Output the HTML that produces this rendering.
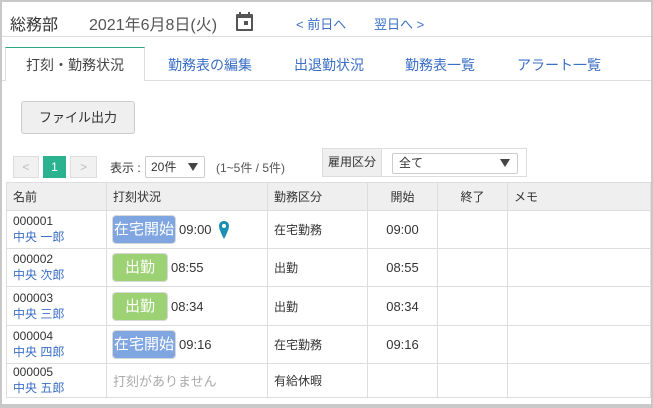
<!DOCTYPE html>
<html><head><meta charset="utf-8"><style>
*{box-sizing:border-box;margin:0;padding:0}
body{width:653px;height:408px;background:#c8c8c8;font-family:"Liberation Sans","Noto Sans CJK JP",sans-serif;color:#333;position:relative;overflow:hidden}
.frame{position:absolute;left:2px;top:2px;width:649px;height:402px;background:#fff}
.a{position:absolute;white-space:nowrap}
.link{color:#3b6fc6}
table{position:absolute;left:6px;top:182px;width:645px;border-collapse:collapse;font-size:12px}
td,th{border:1px solid #ddd;vertical-align:middle;text-align:left;font-weight:normal;padding:0 6px}
th{background:#efefef;height:28px}
.t{font-size:13px;vertical-align:middle;margin-left:3px}
.badge{display:inline-block;color:#fff;border-radius:4px;font-size:15px;height:29px;line-height:27px;text-align:center;vertical-align:middle;border:1px solid #d8d8d8}
.bl{background:#7fa6e0;width:64px}
.gr{background:#9cd174;width:56px}
.arr{position:absolute;top:6px;width:0;height:0;border-left:5px solid transparent;border-right:5px solid transparent;border-top:8px solid #444}
</style></head><body>
<div class="frame"></div>
<div class="a" style="left:10px;top:11px;font-size:16px">総務部</div>
<div class="a" style="left:89px;top:11px;font-size:16px;color:#555">2021年6月8日(火)</div>
<svg class="a" style="left:236px;top:12px" width="17" height="19" viewBox="0 0 17 19"><rect x="0" y="2" width="17" height="17" rx="1" fill="#555"/><rect x="2" y="6" width="13" height="11" fill="#fff"/><rect x="3" y="0" width="2" height="4" fill="#555"/><rect x="12" y="0" width="2" height="4" fill="#555"/><rect x="8" y="9" width="4" height="4" fill="#555"/></svg>
<div class="a link" style="left:296px;top:14px;font-size:13px">&lt; 前日へ</div>
<div class="a link" style="left:374px;top:14px;font-size:13px">翌日へ &gt;</div>
<div class="a" style="left:2px;top:36px;width:649px;border-top:1px solid #ddd"></div>
<div class="a" style="left:2px;top:80px;width:649px;border-top:1px solid #ddd"></div>
<div class="a" style="left:5px;top:47px;width:140px;height:34px;background:#fff;border:1px solid #ddd;border-top:1px solid #2aa58a;border-bottom:none"></div>
<div class="a" style="left:26px;top:55px;font-size:14px;color:#444">打刻・勤務状況</div>
<div class="a link" style="left:168px;top:55px;font-size:14px">勤務表の編集</div>
<div class="a link" style="left:294px;top:55px;font-size:14px">出退勤状況</div>
<div class="a link" style="left:405px;top:55px;font-size:14px">勤務表一覧</div>
<div class="a link" style="left:517px;top:55px;font-size:14px">アラート一覧</div>
<div class="a" style="left:21px;top:101px;width:114px;height:33px;background:#efefef;border:1px solid #ccc;border-radius:3px;font-size:13px;text-align:center;line-height:31px">ファイル出力</div>
<div class="a" style="left:13px;top:156px;width:26px;height:22px;background:#f1f1f1;border:1px solid #ddd;color:#bbb;font-size:12px;text-align:center;line-height:20px">&lt;</div>
<div class="a" style="left:43px;top:156px;width:23px;height:22px;background:#2bb390;color:#fff;font-size:12px;text-align:center;line-height:22px">1</div>
<div class="a" style="left:70px;top:156px;width:27px;height:22px;background:#f1f1f1;border:1px solid #ddd;color:#bbb;font-size:12px;text-align:center;line-height:20px">&gt;</div>
<div class="a" style="left:110px;top:159px;font-size:12px">表示 :</div>
<div class="a" style="left:145px;top:156px;width:60px;height:22px;border:1px solid #ccc;border-radius:2px;font-size:12px;line-height:20px;padding-left:5px">20件<span class="arr" style="right:6px"></span></div>
<div class="a" style="left:216px;top:159px;font-size:12px;color:#555">(1~5件 / 5件)</div>
<div class="a" style="left:322px;top:148px;width:205px;height:29px;border:1px solid #ddd;background:#fff"></div>
<div class="a" style="left:323px;top:149px;width:59px;height:27px;background:#efefef;border-right:1px solid #ddd;font-size:12px;text-align:center;line-height:27px">雇用区分</div>
<div class="a" style="left:392px;top:153px;width:126px;height:21px;border:1px solid #ccc;border-radius:2px;font-size:12px;line-height:19px;padding-left:6px">全て<span class="arr" style="right:7px;top:5px"></span></div>
<table>
<tr><th style="width:100px">名前</th><th style="width:161px">打刻状況</th><th style="width:100px">勤務区分</th><th style="width:70px;text-align:center">開始</th><th style="width:70px;text-align:center">終了</th><th>メモ</th></tr>
<tr style="height:38px"><td>000001<br><span class="link">中央 一郎</span></td><td style="padding-left:5px"><span class="badge bl">在宅開始</span><span class="t">09:00</span><svg width="10" height="18" viewBox="0 0 10 18" style="vertical-align:middle;margin-left:7px"><path d="M5 0C2 0 0 2.2 0 5c0 4 5 13 5 13s5-9 5-13C10 2.2 8 0 5 0z" fill="#1a8fb0"/><circle cx="5" cy="5" r="2" fill="#fff"/></svg></td><td>在宅勤務</td><td style="text-align:center;font-size:13px">09:00</td><td></td><td></td></tr>
<tr style="height:38px"><td>000002<br><span class="link">中央 次郎</span></td><td style="padding-left:5px"><span class="badge gr">出勤</span><span class="t">08:55</span></td><td>出勤</td><td style="text-align:center;font-size:13px">08:55</td><td></td><td></td></tr>
<tr style="height:39px"><td>000003<br><span class="link">中央 三郎</span></td><td style="padding-left:5px"><span class="badge gr">出勤</span><span class="t">08:34</span></td><td>出勤</td><td style="text-align:center;font-size:13px">08:34</td><td></td><td></td></tr>
<tr style="height:38px"><td>000004<br><span class="link">中央 四郎</span></td><td style="padding-left:5px"><span class="badge bl">在宅開始</span><span class="t">09:16</span></td><td>在宅勤務</td><td style="text-align:center;font-size:13px">09:16</td><td></td><td></td></tr>
<tr style="height:34px"><td>000005<br><span class="link">中央 五郎</span></td><td style="color:#aaa;font-size:13px">打刻がありません</td><td>有給休暇</td><td></td><td></td><td></td></tr>
</table>
</body></html>
